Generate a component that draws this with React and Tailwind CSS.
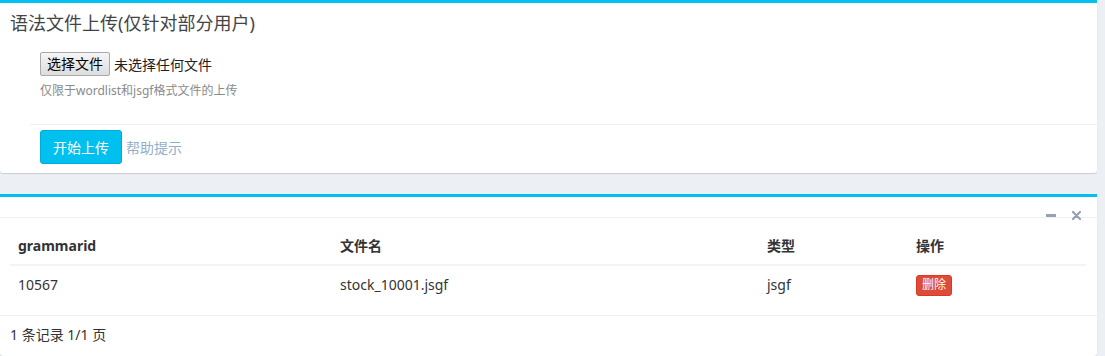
export default function App() {
  const rows = [{ id: "10567", name: "stock_10001.jsgf", type: "jsgf" }];

  return (
    <div
      className="w-[1105px] h-[356px] bg-[#ecf0f5] text-[14px] text-[#333] overflow-hidden"
      style={{ fontFamily: '"Noto Sans", "Noto Sans CJK SC", sans-serif' }}
    >
      {/* upload box */}
      <div className="w-[1097px] h-[173px] bg-white border-t-[3px] border-[#00c0ef] rounded-b-[3px] shadow-[0_1px_1px_rgba(0,0,0,0.15)]">
        <div className="px-[10px] pt-[5px] h-[40px]">
          <h3 className="text-[18px] leading-[30px] text-[#444]">语法文件上传(仅针对部分用户)</h3>
        </div>
        <div className="pl-[40px] pt-[9px]">
          <div className="flex items-center h-[24px]">
            <button className="h-[24px] px-[6px] text-[14px] leading-none text-black border border-[#a9a9a9] rounded-[2px] bg-gradient-to-b from-[#f6f6f6] to-[#dddddd]">
              选择文件
            </button>
            <span className="ml-[4px] text-[14px] text-[#222]">未选择任何文件</span>
          </div>
          <p className="mt-[6px] text-[12px] leading-[18px] text-[#8a8a8a]">仅限于wordlist和jsgf格式文件的上传</p>
        </div>
        <div className="ml-[30px] mt-[24px] border-t border-[#f0f0f0] pt-[5px] pl-[10px] flex items-center">
          <button className="h-[34px] px-[12px] rounded-[3px] bg-[#00c0ef] border border-[#00acd6] text-white text-[14px]">
            开始上传
          </button>
          <a className="ml-[4px] text-[14px] text-[#8fb0cd]">帮助提示</a>
        </div>
      </div>

      {/* list box */}
      <div className="relative mt-[21px] w-[1097px] bg-white border-t-[3px] border-[#00c0ef] rounded-b-[3px] shadow-[0_1px_1px_rgba(0,0,0,0.15)]">
        <div className="h-[21px] border-b border-[#f0f0f0]"></div>
        <div className="absolute right-[16px] top-[14px] flex items-center gap-[16px]">
          <span className="block w-[10px] h-[3px] bg-[#97a0b3]"></span>
          <svg width="9" height="9" viewBox="0 0 9 9">
            <path d="M1 1 L8 8 M8 1 L1 8" stroke="#97a0b3" strokeWidth="2.2" strokeLinecap="round" />
          </svg>
        </div>
        <div className="p-[10px]">
          <table className="w-[1076px] border-collapse">
            <thead>
              <tr className="border-b-2 border-[#f4f4f4]">
                <th className="w-[322px] p-[8px] text-left font-bold leading-[20px]">grammarid</th>
                <th className="w-[427px] p-[8px] text-left font-bold leading-[20px]">文件名</th>
                <th className="w-[149px] p-[8px] text-left font-bold leading-[20px]">类型</th>
                <th className="p-[8px] text-left font-bold leading-[20px]">操作</th>
              </tr>
            </thead>
            <tbody>
              {rows.map((r) => (
                <tr key={r.id}>
                  <td className="p-[8px] pb-[9px] leading-[20px]">{r.id}</td>
                  <td className="p-[8px] pb-[9px] leading-[20px]">{r.name}</td>
                  <td className="p-[8px] pb-[9px] leading-[20px]">{r.type}</td>
                  <td className="p-[8px] pb-[9px] leading-[20px]">
                    <button className="h-[21px] px-[5px] rounded-[3px] bg-[#dd4b39] border border-[#d73925] text-white text-[12px] leading-[18px]">
                      删除
                    </button>
                  </td>
                </tr>
              ))}
            </tbody>
          </table>
        </div>
        <div className="border-t border-[#f0f0f0] px-[10px] pt-[9px] pb-[11px] leading-[20px] h-[41px]">1 条记录 1/1 页</div>
      </div>
    </div>
  );
}
